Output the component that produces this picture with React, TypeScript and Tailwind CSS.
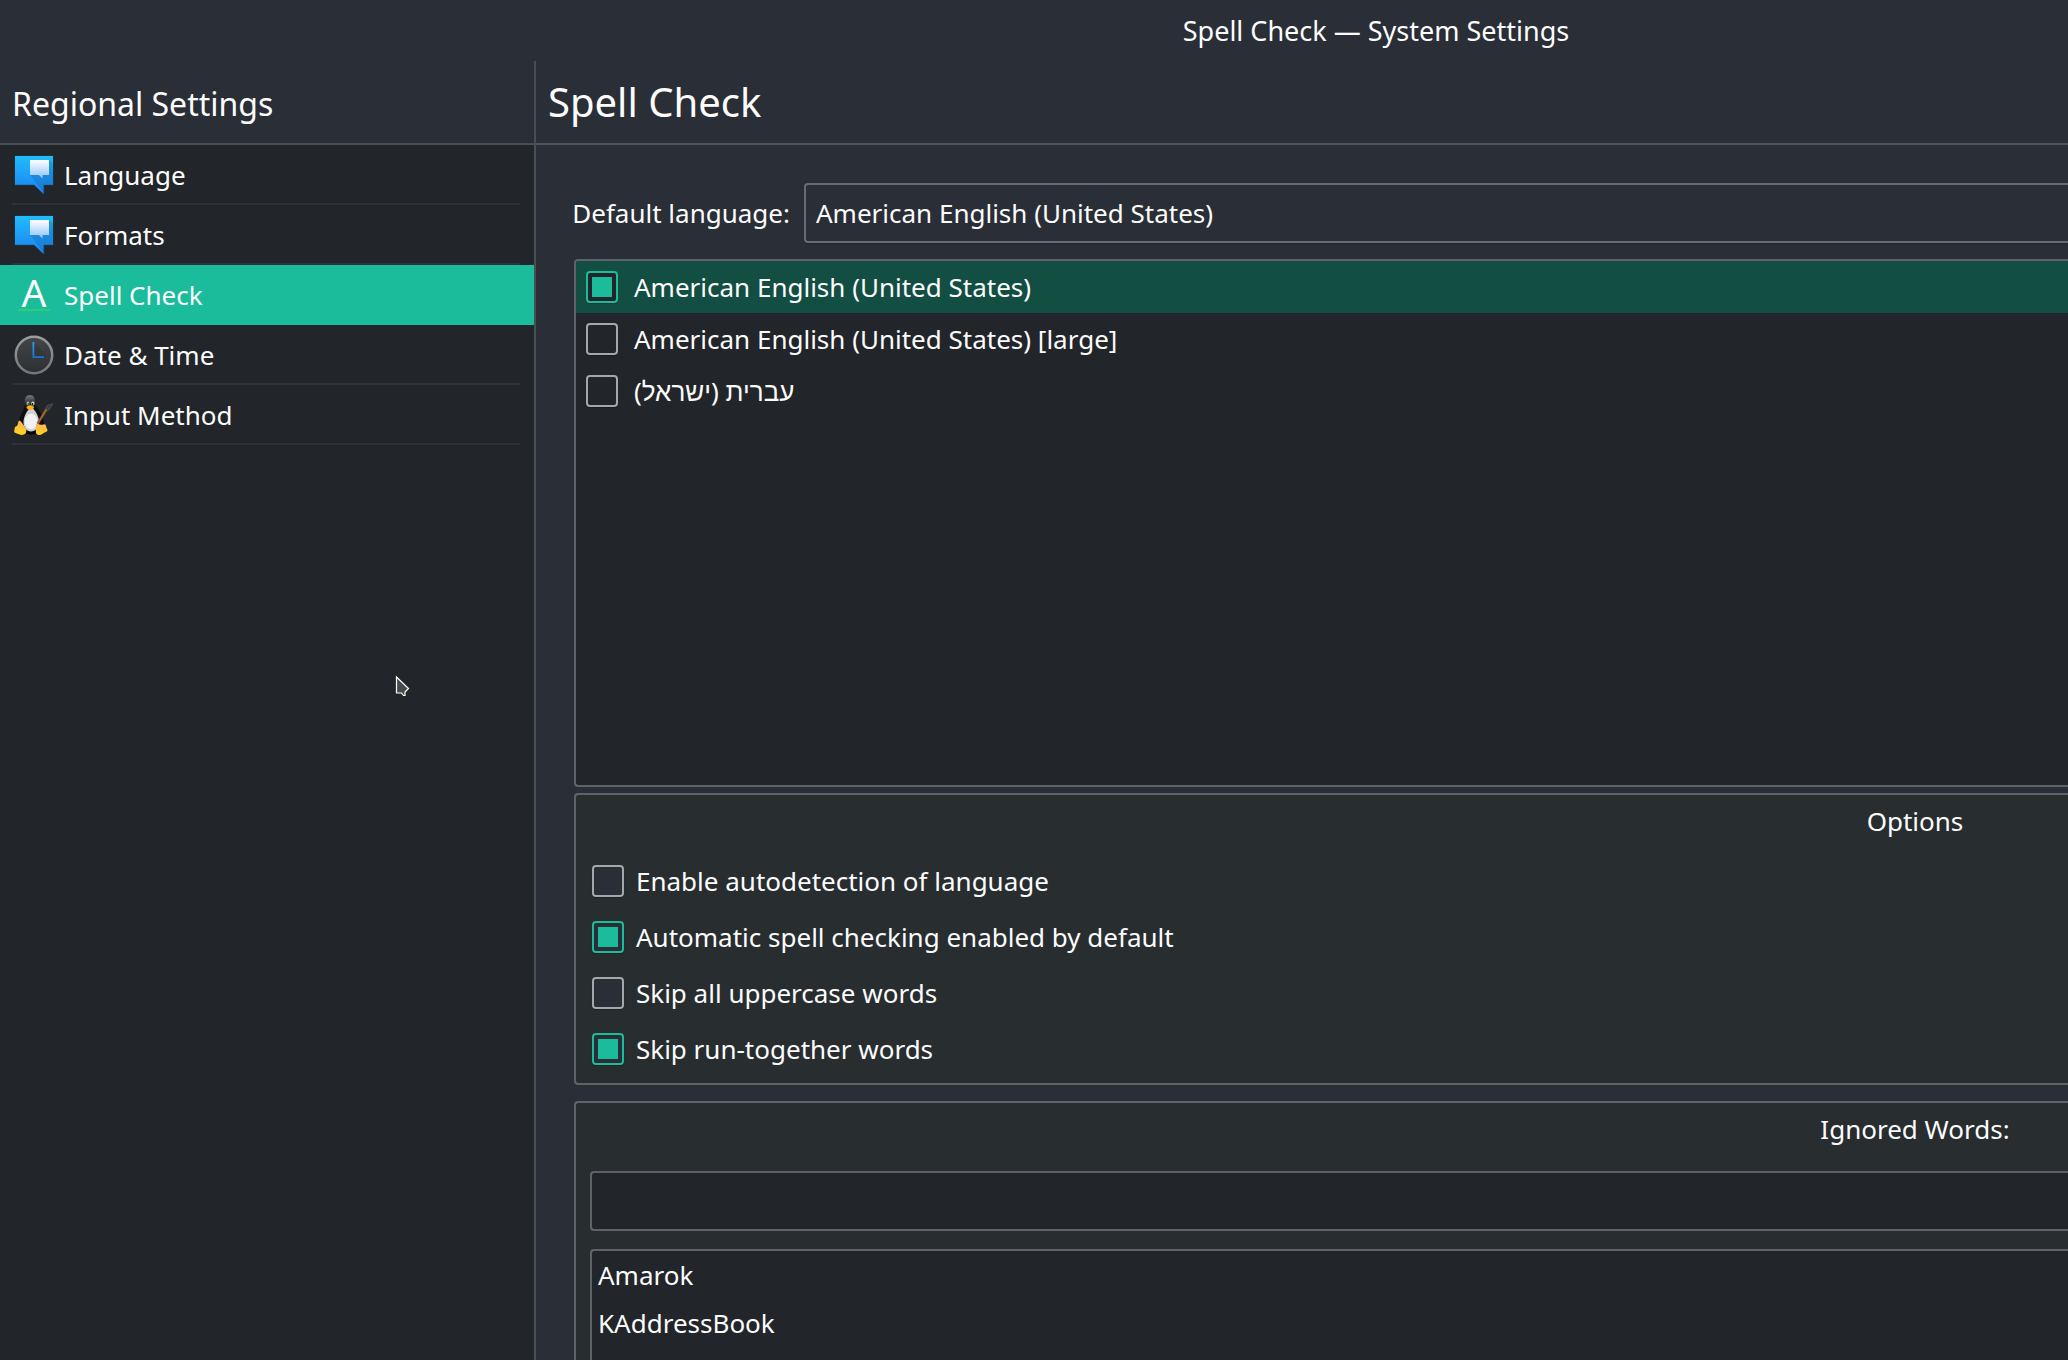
import React from "react";

const SpeechIcon = ({ id }: { id: string }) => (
  <svg width="40" height="40" viewBox="0 0 40 40" className="block">
    <defs>
      <linearGradient id={`${id}-b`} x1="0" y1="0" x2="0" y2="1">
        <stop offset="0" stopColor="#20bcfb" />
        <stop offset="1" stopColor="#1c80f2" />
      </linearGradient>
      <linearGradient id={`${id}-w`} x1="0" y1="0" x2="0" y2="1">
        <stop offset="0" stopColor="#ffffff" />
        <stop offset="1" stopColor="#8fc2f8" />
      </linearGradient>
    </defs>
    <path d="M.5.5h39v30h-9v9l-10-9H.5z" fill="#17485f" opacity=".7" />
    <path d="M1 1h38v28.700h-9.500V39l-9.500-9.300H1z" fill={`url(#${id}-b)`} />
    <path d="M16 20l13.500 17V29.700H39V9l-4-4z" fill="#15609f" opacity=".3" />
    <path d="M16 5h19v15h-6.500v3.500L25 20h-9z" fill={`url(#${id}-w)`} />
  </svg>
);

const SpellIcon = () => (
  <span className="flex h-10 w-10 flex-col items-center">
    <span className="-mt-2.5 h-11 text-[39px] leading-[54px]">A</span>
    <span className="h-0.5 w-8 shrink-0 bg-[#2ecc71]" />
  </span>
);

const ClockIcon = () => (
  <svg width="40" height="40" viewBox="0 0 40 40" className="block">
    <defs>
      <linearGradient id="clock-rim" x1="0" y1="0" x2="0" y2="1">
        <stop offset="0" stopColor="#9a9da0" />
        <stop offset="1" stopColor="#6f797d" />
      </linearGradient>
      <linearGradient id="clock-face" x1="0" y1="0" x2="0" y2="1">
        <stop offset="0" stopColor="#43474a" />
        <stop offset="1" stopColor="#2d2f31" />
      </linearGradient>
      <linearGradient id="clock-hand" x1="0" y1="0" x2="0" y2="1">
        <stop offset="0" stopColor="#1fa5f5" />
        <stop offset="1" stopColor="#1d6fd0" />
      </linearGradient>
    </defs>
    <circle cx="20" cy="20" r="18.200" fill="url(#clock-face)" stroke="url(#clock-rim)" strokeWidth="2.500" />
    <path d="M20 8l13 13-4 2-9-2z" fill="#2a2c2e" opacity=".35" />
    <path d="M18.500 7h1.800v14.200h9.700v1.800H18.500z" fill="url(#clock-hand)" />
  </svg>
);

const TuxIcon = () => (
  <svg width="40" height="42" viewBox="0 0 40 42" className="block">
    <defs>
      <linearGradient id="tux-head" x1="0" y1="0" x2="0" y2="1">
        <stop offset="0" stopColor="#77797b" />
        <stop offset=".3" stopColor="#101112" />
        <stop offset="1" stopColor="#050505" />
      </linearGradient>
      <linearGradient id="tux-foot" x1="0" y1="0" x2="0" y2="1">
        <stop offset="0" stopColor="#ffb257" />
        <stop offset="1" stopColor="#ffd51e" />
      </linearGradient>
    </defs>
    <path d="M16 1c-4 0-5.500 3-5.300 7 .2 3.500-.2 5.500-2 9C6.500 21 4.500 25 5 30c.4 5 4 10.500 12 10.500S30 36 30 30c0-5-2-9-4.500-13-2-3.500-4.300-5-4.500-9C20.800 4 20 1 16 1z" fill="url(#tux-head)" />
    <path d="M15 15c-2.500 3-5.500 8-5.500 13 0 6 3 9.500 7.500 9.500s8-3.500 8-9.500c0-5-3-10-5.500-13z" fill="#cfd0d2" />
    <ellipse cx="17" cy="27.500" rx="6.300" ry="7.800" fill="#f1f1f2" />
    <ellipse cx="14" cy="9.500" rx="1.400" ry="2" fill="#bdbdbd" />
    <ellipse cx="18.800" cy="9.500" rx="1.700" ry="2.100" fill="#d6d6d6" />
    <circle cx="14.300" cy="10" r=".8" fill="#111" />
    <circle cx="18.500" cy="10" r=".9" fill="#111" />
    <path d="M12.500 12.800l3.800-1.800 3.700 1.800c.3 1.500-2 3.200-3.700 3.200s-4-1.500-3.800-3.200z" fill="#fdb515" />
    <path d="M5.500 26.500c2 .8 4.500 5.500 6.500 9 1 2.500-.5 5.500-4 5.500-2.500 0-4.500-1.500-7-2.200-1.500-.6-.5-3-.3-4.800.2-2 1.500-1.200 2.600-2.500 1.200-1.600.6-4.800 2.200-5z" fill="url(#tux-foot)" />
    <path d="M22 30c1.500-.8 3 1 5.500.8 2-.2 3-1.300 4 0 1 1.600.3 2.500 1.600 4.200 1 1.400.2 2.500-1.300 3-2.500 1-4.500 3.500-7.300 3-3.500-.8-2.500-4-2.500-6z" fill="url(#tux-foot)" />
    <path d="M33.500 15.500L24.500 30l-1.500-1 8.800-14.500z" fill="#b06c35" stroke="#8a4b1c" strokeWidth=".8" />
    <path d="M34.200 16.500l-2.800-1.800 1.300-2.700c1.500-1.500 4-1.600 6-2-.8 1.200-1.300 2.200-2 3.800z" fill="#3b3d40" stroke="#5d6063" strokeWidth=".6" />
  </svg>
);

type NavItem = { label: string; icon: React.ReactNode; active?: boolean };

const navItems: NavItem[] = [
  { label: "Language", icon: <SpeechIcon id="lang" /> },
  { label: "Formats", icon: <SpeechIcon id="fmt" /> },
  { label: "Spell Check", icon: <SpellIcon />, active: true },
  { label: "Date & Time", icon: <ClockIcon /> },
  { label: "Input Method", icon: <TuxIcon /> },
];

const dictionaries = [
  { label: "American English (United States)", checked: true },
  { label: "American English (United States) [large]", checked: false },
  { label: "עברית (ישראל)", checked: false },
];

const options = [
  { label: "Enable autodetection of language", checked: false },
  { label: "Automatic spell checking enabled by default", checked: true },
  { label: "Skip all uppercase words", checked: false },
  { label: "Skip run-together words", checked: true },
];

const ignoredWords = ["Amarok", "KAddressBook"];

function Checkbox({ checked, fill }: { checked: boolean; fill: string }) {
  return (
    <span
      className={`flex h-8 w-8 shrink-0 items-center justify-center rounded-[4px] border-2 shadow-[0_1px_1px_rgba(0,0,0,0.25)] ${fill} ${
        checked ? "border-[#1abc9c]" : "border-[#a5a8aa]"
      }`}
    >
      {checked && <span className="h-5 w-5 bg-[#1abc9c]" />}
    </span>
  );
}

export default function App() {
  return (
    <div className="relative flex h-[1360px] w-[2068px] flex-col overflow-hidden bg-[#2a2e36] font-['Noto_Sans',sans-serif] text-[26px] leading-9 text-[#fcfcfc]">
      <header className="flex h-[61px] shrink-0 items-center justify-center pl-[684px] text-[27px]">
        Spell Check — System Settings
      </header>

      <div className="flex min-h-0 flex-1">
        <aside className="flex w-[536px] shrink-0 flex-col border-r-2 border-[#46514f] bg-[#222529]">
          <h2 className="flex h-[84px] shrink-0 items-center border-b-2 border-[#46514f] bg-[#2a2e36] pl-3 pt-1 text-[32px]">
            Regional Settings
          </h2>
          <nav>
            {navItems.map((item) => (
              <div key={item.label} className={`h-[60px] pl-3 pr-3.5 ${item.active ? "bg-[#1abc9c]" : ""}`}>
                <div
                  className={`flex h-full items-center border-b-2 pt-0.5 ${
                    item.active ? "border-[#1abc9c]" : "border-[#2d3236]"
                  }`}
                >
                  <span className="ml-0.5 flex w-10">{item.icon}</span>
                  <span className="ml-2.5">{item.label}</span>
                </div>
              </div>
            ))}
          </nav>
        </aside>

        <main className="flex min-w-0 flex-1 flex-col">
          <h1 className="flex h-[84px] shrink-0 items-center border-b-2 border-[#4a5957] pl-3 text-[40px]">
            Spell Check
          </h1>

          <div className="flex min-h-0 flex-1 flex-col pl-[38px]">
            <div className="mt-[38px] flex h-[60px] shrink-0 items-center">
              <span className="flex w-[230px] shrink-0 justify-end whitespace-nowrap pr-[14px]">
                Default language:
              </span>
              <div className="flex h-full flex-1 items-center rounded-l-[4px] border-2 border-r-0 border-[#686b6f] pl-[10px] shadow-[0_1px_1px_rgba(0,0,0,0.2)]">
                American English (United States)
              </div>
            </div>

            <div className="mt-4 flex h-[528px] shrink-0 flex-col overflow-hidden rounded-l-[4px] border-2 border-r-0 border-[#5f6266] bg-[#222529]">
              {dictionaries.map((d) => (
                <div
                  key={d.label}
                  className={`flex h-[52px] shrink-0 items-center gap-4 pl-2.5 ${d.checked ? "bg-[#134e43]" : ""}`}
                >
                  <Checkbox checked={d.checked} fill="bg-[#222529]" />
                  <span>{d.label}</span>
                </div>
              ))}
            </div>

            <section className="mt-1.5 flex h-[292px] shrink-0 flex-col rounded-l-[4px] border-2 border-r-0 border-[#5f6266] bg-[#282d30]">
              <h3 className="flex h-[52px] shrink-0 items-center justify-center pl-[1186px]">Options</h3>
              <div className="flex flex-col gap-6 pl-4 pt-[18px]">
                {options.map((o) => (
                  <div key={o.label} className="flex h-8 items-center gap-3">
                    <Checkbox checked={o.checked} fill="bg-[#2a2e36]" />
                    <span>{o.label}</span>
                  </div>
                ))}
              </div>
            </section>

            <section className="mt-4 flex min-h-0 flex-1 flex-col rounded-tl-[4px] border-l-2 border-t-2 border-[#5f6266] bg-[#282d30] pl-3.5">
              <h3 className="flex h-[52px] shrink-0 items-center justify-center pl-[1172px]">Ignored Words:</h3>
              <div className="mt-4 h-[60px] shrink-0 rounded-l-[4px] border-2 border-r-0 border-[#5f6266] bg-[#222529]" />
              <div className="mt-[18px] min-h-0 flex-1 rounded-tl-[4px] border-l-2 border-t-2 border-[#5f6266] bg-[#222529] pl-1.5">
                {ignoredWords.map((w) => (
                  <div key={w} className="flex h-12 items-center">
                    {w}
                  </div>
                ))}
              </div>
            </section>
          </div>
        </main>
      </div>

      <svg className="absolute left-[395px] top-[675px]" width="16" height="24" viewBox="0 0 16 24">
        <path d="M1.500 2v16h5l2 2.500h1.500V17l3.500-3.500z" fill="#4a4a4a" stroke="#fff" strokeWidth="1.200" />
      </svg>
    </div>
  );
}
